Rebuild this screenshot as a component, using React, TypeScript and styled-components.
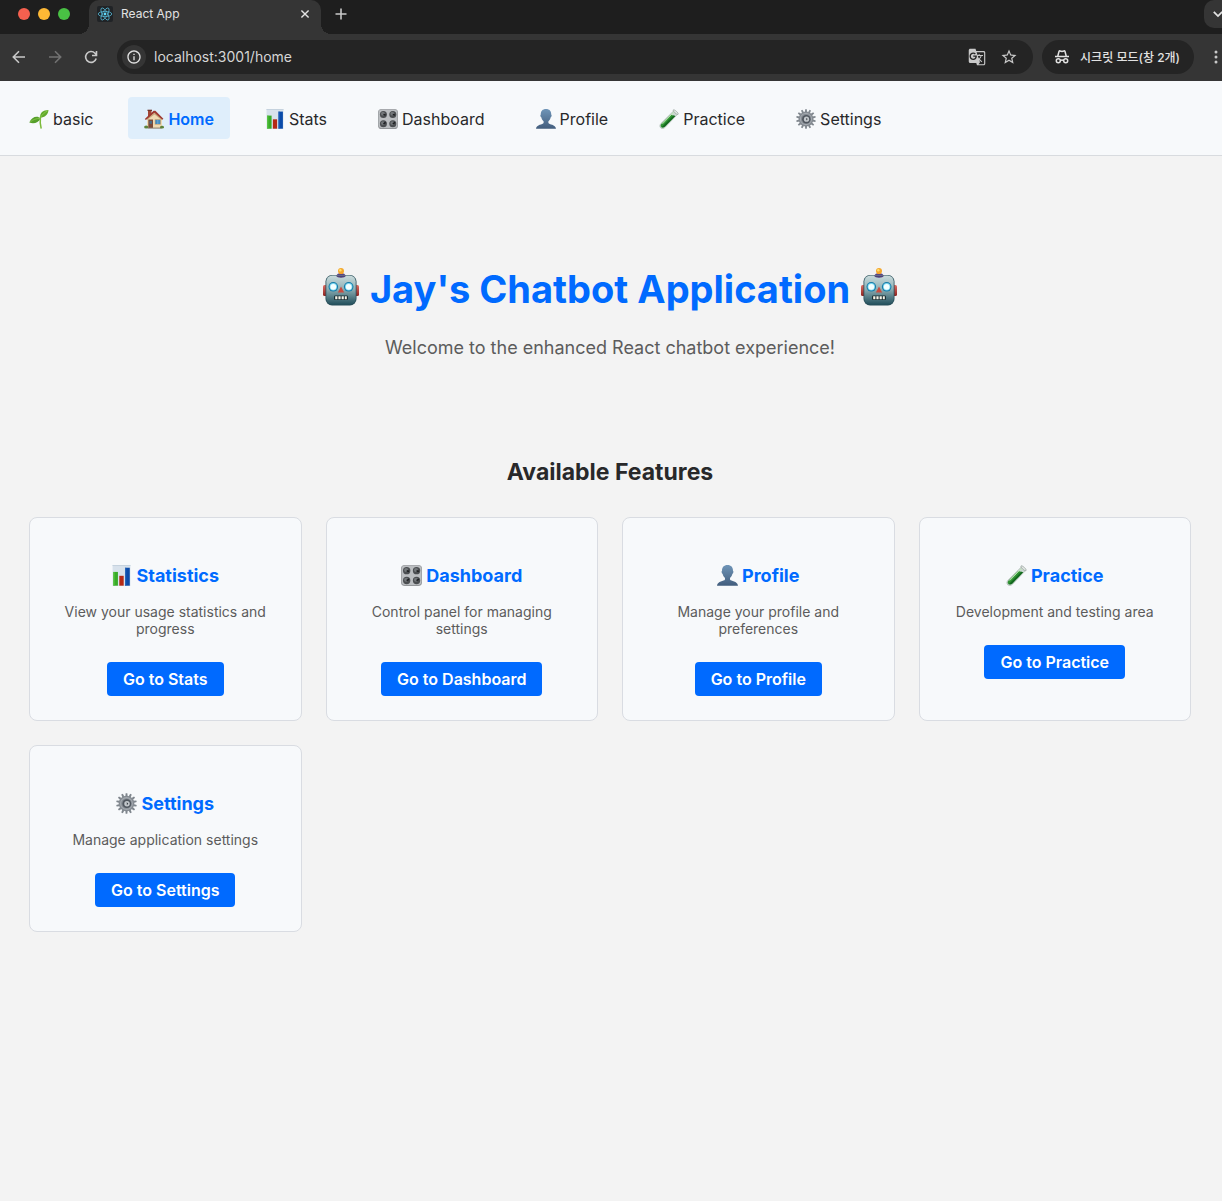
import React from 'react';
import styled, { createGlobalStyle } from 'styled-components';
import { MdGTranslate, MdStarBorder, MdInfoOutline } from 'react-icons/md';

const GlobalStyle = createGlobalStyle`
  * { box-sizing: border-box; }
  body {
    margin: 0;
    background: #f3f3f3;
    color: #28282a;
    font-family: Inter, "Noto Sans CJK KR", sans-serif;
    font-size: 16px;
  }
`;

/* ---------- browser chrome ---------- */

const TabStrip = styled.div`
  display: flex;
  align-items: flex-start;
  height: 34px;
  padding-left: 18px;
  background: #1e1e1e;
  overflow: hidden;
`;

const WindowControls = styled.div`
  display: flex;
  gap: 8px;
  padding-top: 8px;
  margin-right: 19px;
`;

const Light = styled.button<{ $color: string }>`
  width: 12px;
  height: 12px;
  padding: 0;
  border: 0;
  border-radius: 50%;
  background: ${(p) => p.$color};
`;

const Tab = styled.div`
  position: relative;
  display: flex;
  align-items: center;
  gap: 8px;
  width: 232px;
  height: 34px;
  padding: 0 10px 6px 8px;
  border-radius: 10px 10px 0 0;
  background: #353535;
  color: #e2e2e2;
  font-size: 12px;

  &::before,
  &::after {
    content: '';
    position: absolute;
    bottom: 0;
    width: 10px;
    height: 10px;
  }
  &::before {
    left: -10px;
    background: radial-gradient(circle at 0 0, #1e1e1e 10px, #353535 10px);
  }
  &::after {
    right: -10px;
    background: radial-gradient(circle at 100% 0, #1e1e1e 10px, #353535 10px);
  }
`;

const TabTitle = styled.span`
  flex: 1;
  padding-bottom: 2px;
`;

const IconButton = styled.button<{ $size?: number; $color?: string }>`
  display: flex;
  align-items: center;
  justify-content: center;
  flex: none;
  width: ${(p) => p.$size ?? 20}px;
  height: ${(p) => p.$size ?? 20}px;
  padding: 0;
  border: 0;
  background: none;
  color: ${(p) => p.$color ?? '#c9c9c9'};
`;

const NewTab = styled(IconButton)`
  margin: 4px 0 0 10px;
`;

const TabSearch = styled.button`
  display: flex;
  align-items: center;
  width: 28px;
  height: 28px;
  margin: 0 -10px 0 auto;
  padding: 0 0 0 8px;
  border: 0;
  border-radius: 10px;
  background: #353535;
  color: #e2e2e2;
`;

const Toolbar = styled.div`
  display: flex;
  align-items: center;
  height: 47px;
  padding: 0 0 1px 9px;
  background: #353535;
`;

const History = styled.div`
  display: flex;
  gap: 16px;
  margin-right: 16px;
`;

const AddressBar = styled.label`
  display: flex;
  align-items: center;
  flex: 1;
  height: 34px;
  margin-right: 9px;
  padding: 0 14px 0 5px;
  gap: 12px;
  border-radius: 17px;
  background: #242424;
`;

const SiteInfo = styled(IconButton)`
  margin-right: -4px;
  border-radius: 50%;
  background: #353535;
  color: #e2e2e2;
`;

const Address = styled.input`
  flex: 1;
  min-width: 0;
  padding: 0 0 2px;
  border: 0;
  outline: 0;
  background: none;
  color: #d6d6d6;
  font-family: inherit;
  font-size: 14px;
`;

const Incognito = styled.div`
  display: flex;
  align-items: center;
  gap: 10px;
  height: 34px;
  margin-right: 16px;
  padding: 0 14px 0 12px;
  border-radius: 17px;
  background: #242424;
  color: #e2e2e2;
  font-size: 12px;
  font-weight: 500;
  white-space: nowrap;
`;

const IncognitoLabel = styled.span`
  padding-bottom: 2px;
`;

/* ---------- page ---------- */

const Nav = styled.nav`
  display: flex;
  gap: 19px;
  padding: 16px 13px;
  border-bottom: 1px solid #d8dbdf;
  background: #f7f9fb;
`;

const NavLink = styled.a<{ $active?: boolean }>`
  display: flex;
  align-items: center;
  gap: 4px;
  height: 42px;
  padding: 2px 16px 0;
  border-radius: 4px;
  background: ${(p) => (p.$active ? '#dfeefb' : 'transparent')};
  color: ${(p) => (p.$active ? '#006aff' : '#28282a')};
  font-size: 16px;
  font-weight: ${(p) => (p.$active ? 600 : 400)};
  text-decoration: none;
`;

const Main = styled.main`
  padding: 0 31px 40px 29px;
`;

const Hero = styled.header`
  padding: 108px 0 96px;
  text-align: center;
`;

const Title = styled.h1`
  display: flex;
  align-items: center;
  justify-content: center;
  gap: 10px;
  margin: 0 0 20px;
  color: #006aff;
  font-size: 38px;
  font-weight: 700;
  line-height: 50px;

  svg {
    margin-bottom: 4px;
  }
`;

const Lead = styled.p`
  margin: 0;
  color: #5c5c5c;
  font-size: 18px;
  line-height: 28px;
`;

const SectionTitle = styled.h2`
  margin: 0 0 31px;
  font-size: 23px;
  font-weight: 700;
  line-height: 28px;
  text-align: center;
`;

const Grid = styled.div`
  display: grid;
  grid-template-columns: repeat(auto-fill, minmax(250px, 1fr));
  gap: 24px;
`;

const Card = styled.article`
  padding: 46px 24px 24px;
  border: 1px solid #d9dce2;
  border-radius: 8px;
  background: #f7f9fb;
  text-align: center;
`;

const CardTitle = styled.h3`
  display: flex;
  align-items: center;
  justify-content: center;
  gap: 4px;
  margin: 0 0 15px;
  color: #006aff;
  font-size: 18px;
  font-weight: 700;
  line-height: 24px;

  svg {
    margin-bottom: 2px;
  }
`;

const CardText = styled.p`
  margin: 0 0 25px;
  color: #5c5c5c;
  font-size: 14px;
  line-height: 17px;
`;

const CardButton = styled.button`
  height: 34px;
  padding: 0 16px;
  border: 0;
  border-radius: 4px;
  background: #006aff;
  color: #fff;
  font-family: inherit;
  font-size: 16px;
  font-weight: 600;
  vertical-align: top;
`;

/* ---------- pictograms, drawn on a 20 unit square ---------- */

const Glyph = styled.svg`
  flex: none;
  display: block;
`;

type IconProps = { size?: number };

const Seedling = ({ size = 20 }: IconProps) => (
  <Glyph width={size} height={size} viewBox="0 0 20 20" aria-hidden="true">
    <path d="M11.4 8.2C11 12 11 15 12.1 19" fill="none" stroke="#7cba3a" strokeWidth="1.5" strokeLinecap="round" />
    <path d="M11.2 8.8C10.500 4 14 1.200 19.500 1.100 19 6 15.800 8.500 11.200 8.800Z" fill="#62a92c" />
    <path d="M11.600 8.400C13 5.500 15.500 3.500 18.500 1.900" fill="none" stroke="#92cf4c" strokeWidth=".8" />
    <path d="M11.300 9.400C8.500 6.200 2.500 8 .3 13.500 5 15.200 9.800 13.500 11.300 9.400Z" fill="#559f2a" />
    <path d="M11 9.500C7.500 9.400 4 10.500 1.200 13" fill="none" stroke="#8bc94a" strokeWidth=".8" />
  </Glyph>
);

const House = ({ size = 20 }: IconProps) => (
  <Glyph width={size} height={size} viewBox="0 0 20 20" aria-hidden="true">
    <path d="M4 1h3.500v5L4 9Z" fill="#a24635" />
    <path d="M3.500.7h4.500v1.300H3.500Z" fill="#6e352d" />
    <path d="M10.500 2.500 18 9.500V19H3V9Z" fill="#efdab3" />
    <path d="M3 9.500 10.500 4 18 9.500v1.700L10.500 5.600 3 11Z" fill="#c9ab7e" />
    <path d="M.8 9.900 9.600 1.800h1.800l8 8-1 1-8-7-8.500 7.200Z" fill="#9e3930" />
    <path d="M4.300 10.500h4.700v8.500H4.300Z" fill="#7c4938" />
    <path d="M5.500 12h2.400v2.800H5.500Z" fill="#4b6f89" />
    <path d="M10.800 10.300h6v5.300h-6Z" fill="#b99a6e" />
    <path d="M11.400 10.900h4.800v4.100h-4.800Z" fill="#458cc1" />
    <path d="M13.800 10.900v4.100" stroke="#8dbdda" strokeWidth=".6" />
    <path d="M3.600 18.600h14v1h-14Z" fill="#8b7b68" />
    <ellipse cx="2.200" cy="18" rx="2.100" ry="1.600" fill="#5e833c" />
    <ellipse cx="18" cy="18.200" rx="2" ry="1.400" fill="#5e833c" />
  </Glyph>
);

const BarChart = ({ size = 20 }: IconProps) => (
  <Glyph width={size} height={size} viewBox="0 0 20 20" aria-hidden="true">
    <path d="M1.500 0h17v20h-17Z" fill="#d8e2ec" />
    <path d="M1.500 0h17v1h-17Z" fill="#c5d2de" />
    <path d="M2.200 6.600h4.400v13.100H2.200Z" fill="#38ab28" />
    <path d="M7.900 10.300h4.200v9.400H7.900Z" fill="#b52a16" />
    <path d="M13.500 2.600h4.400v17.100h-4.400Z" fill="#0b4ba9" />
    <path d="M2.200 6.600h1.200v13.100H2.200Z" fill="#58c542" />
    <path d="M13.500 2.600h1v17.100h-1Z" fill="#2767bd" />
  </Glyph>
);

const knobs = [
  [5.4, 5.4],
  [14.8, 5.4],
  [5.4, 14.8],
  [14.8, 14.8],
];

const ControlKnobs = ({ size = 20 }: IconProps) => (
  <Glyph width={size} height={size} viewBox="0 0 20 20" aria-hidden="true">
    <rect width="20" height="20" rx="3.600" fill="#94979a" />
    <rect x=".6" y=".5" width="18.800" height="18.500" rx="3.200" fill="#bbbec1" />
    {knobs.map(([x, y]) => (
      <g key={`${x}-${y}`}>
        <circle cx={x} cy={y} r="3.500" fill="#4b4e51" />
        <circle cx={x - 0.5} cy={y - 0.7} r="1.900" fill="#73777a" />
        <path d={`M${x} ${y}l2.200 ${y > 10 ? -1.4 : 0.7}`} stroke="#1c1e20" strokeWidth="1.500" />
      </g>
    ))}
  </Glyph>
);

const Bust = ({ size = 20 }: IconProps) => (
  <Glyph width={size} height={size} viewBox="0 0 20 20" aria-hidden="true">
    <defs>
      <linearGradient id="bust" x1="0" y1="0" x2="0" y2="1">
        <stop offset="0" stopColor="#6f95b8" />
        <stop offset="1" stopColor="#425d7d" />
      </linearGradient>
    </defs>
    <path
      d="M10 0C6.600 0 4.600 2.200 4.800 5.500c-.8.2-.5 2.500.6 3 .3 1.700 1.200 2.900 2.200 3.700v1.700C6.800 15.800.5 15 0 19.800h20C19.500 15 13.200 15.800 12.400 13.900v-1.700c1-.8 1.900-2 2.200-3.700 1.100-.5 1.400-2.800.6-3C15.400 2.200 13.400 0 10 0Z"
      fill="url(#bust)"
    />
  </Glyph>
);

const TestTube = ({ size = 20 }: IconProps) => (
  <Glyph width={size} height={size} viewBox="0 0 20 20" aria-hidden="true">
    <path d="m15 1.500 3.800 3.600L6.200 18.300c-3.300 3.200-7.300-.4-4.300-3.800Z" fill="#cbd7d1" stroke="#9ba8a2" strokeWidth=".5" />
    <path d="m11.700 5.800 4.600 1.100L6 17.600c-2.600 2.600-6-.1-3.500-2.800Z" fill="#2f9233" />
    <path d="M3 17.800 14.500 6.500l1.800.4L6 17.600c-1 .9-2.300 1-3 .2Z" fill="#14681f" />
    <path d="M3.500 14.800 14.500 3.400" stroke="#bdebb1" strokeWidth=".9" />
    <path d="M14.300.9c1-.9 5.700 3.200 4.800 4.400-1.100 1-5.600-3.300-4.800-4.400Z" fill="#e4e9e6" stroke="#929d98" strokeWidth=".7" />
  </Glyph>
);

const teeth = Array.from({ length: 14 }, (_, i) => (i * 360) / 14);

const Gear = ({ size = 20 }: IconProps) => (
  <Glyph width={size} height={size} viewBox="0 0 20 20" aria-hidden="true">
    {teeth.map((a) => (
      <path key={a} d="M8.900 3.500 9.200.2h1.600l.3 3.300Z" fill="#7f868d" transform={`rotate(${a} 10 10)`} />
    ))}
    <circle cx="10" cy="10" r="7.400" fill="#858b92" />
    <circle cx="10" cy="10" r="5.600" fill="none" stroke="#a4aab0" strokeWidth="1" />
    <circle cx="10.300" cy="10.200" r="4.200" fill="#50575f" />
    <circle cx="10.500" cy="10.200" r="2.600" fill="#c3c8cc" />
    <path d="M10.200 8.900 11.700 10l-1.300 1.600Z" fill="#343a40" />
  </Glyph>
);

const Robot = ({ size = 38 }: IconProps) => (
  <Glyph width={size} height={size} viewBox="0 0 38 38" aria-hidden="true">
    <defs>
      <linearGradient id="robotHead" x1="0" y1="0" x2="0" y2="1">
        <stop offset="0" stopColor="#cadbdc" />
        <stop offset=".45" stopColor="#91b2b7" />
        <stop offset="1" stopColor="#23505d" />
      </linearGradient>
      <linearGradient id="robotEar" x1="0" y1="0" x2="0" y2="1">
        <stop offset="0" stopColor="#e06c62" />
        <stop offset="1" stopColor="#8e2320" />
      </linearGradient>
    </defs>
    <rect x="1" y="17" width="5" height="11" rx="1.500" fill="url(#robotEar)" />
    <rect x="32" y="17" width="5" height="11" rx="1.500" fill="url(#robotEar)" />
    <path d="M14.500 8c0-4 9-4 9 0Z" fill="#594783" />
    <path d="M17 2h4v4h-4Z" fill="#e77924" />
    <circle cx="19" cy="3" r="3" fill="#f4a72e" />
    <circle cx="18.300" cy="2.200" r="1.200" fill="#ffe16b" />
    <rect x="3.500" y="7" width="31" height="30.500" rx="6.500" fill="#294f5a" />
    <rect x="4.300" y="7.400" width="29.400" height="29" rx="6" fill="url(#robotHead)" />
    <path d="M14 7.500h10c-1 3-9 3-10 0Z" fill="#4e3f77" />
    {[11.3, 26.7].map((x) => (
      <g key={x}>
        <circle cx={x} cy="18.800" r="4.800" fill="#147ca9" />
        <circle cx={x} cy="18.800" r="3.700" fill="#7fd8f2" />
        <circle cx={x} cy="18.800" r="2.900" fill="#f3ffff" />
      </g>
    ))}
    <path d="m19 18.500 3.200 6h-6.400Z" fill="#c84c40" />
    <rect x="12" y="27.500" width="14" height="4.500" rx="1.200" fill="#192d32" />
    <path d="M13.200 28.300h2.200v2.900h-2.200ZM16.400 28.300h2.200v2.900h-2.200ZM19.600 28.300h2.200v2.900h-2.200ZM22.800 28.300h2v2.900h-2Z" fill="#f5f4e8" />
  </Glyph>
);

const ReactMark = () => (
  <Glyph width="16" height="16" viewBox="0 0 16 16" aria-hidden="true">
    <rect width="16" height="16" rx="2" fill="#202326" />
    <g fill="none" stroke="#54b5d2" strokeWidth=".8">
      <ellipse cx="8" cy="8" rx="6.800" ry="2.600" />
      <ellipse cx="8" cy="8" rx="6.800" ry="2.600" transform="rotate(60 8 8)" />
      <ellipse cx="8" cy="8" rx="6.800" ry="2.600" transform="rotate(120 8 8)" />
    </g>
    <circle cx="8" cy="8" r="1.400" fill="#61dafb" />
  </Glyph>
);

const Stroke = ({ d, size = 20, width = 1.6 }: { d: string; size?: number; width?: number }) => (
  <Glyph width={size} height={size} viewBox="0 0 20 20" fill="none" stroke="currentColor" strokeWidth={width} aria-hidden="true">
    <path d={d} />
  </Glyph>
);

const IncognitoMark = () => (
  <Glyph width="16" height="16" viewBox="0 0 16 16" fill="none" stroke="currentColor" strokeWidth="1.500" aria-hidden="true">
    <path d="M1 7.500h14M3.800 7 5 2.500q.2-.8 1-.6l2 .5 2-.5q.8-.2 1 .6L12.200 7" />
    <circle cx="4.300" cy="11.800" r="2" />
    <circle cx="11.700" cy="11.800" r="2" />
    <path d="M6.300 11.500q1.700-.9 3.400 0" />
  </Glyph>
);

/* ---------- content ---------- */

const links = [
  { label: 'basic', href: '#basic', Icon: Seedling },
  { label: 'Home', href: '#home', Icon: House, active: true },
  { label: 'Stats', href: '#stats', Icon: BarChart },
  { label: 'Dashboard', href: '#dashboard', Icon: ControlKnobs },
  { label: 'Profile', href: '#profile', Icon: Bust },
  { label: 'Practice', href: '#practice', Icon: TestTube },
  { label: 'Settings', href: '#settings', Icon: Gear },
];

const features = [
  { title: 'Statistics', text: 'View your usage statistics and progress', action: 'Go to Stats', Icon: BarChart },
  { title: 'Dashboard', text: 'Control panel for managing settings', action: 'Go to Dashboard', Icon: ControlKnobs },
  { title: 'Profile', text: 'Manage your profile and preferences', action: 'Go to Profile', Icon: Bust },
  { title: 'Practice', text: 'Development and testing area', action: 'Go to Practice', Icon: TestTube },
  { title: 'Settings', text: 'Manage application settings', action: 'Go to Settings', Icon: Gear },
];

export default function App() {
  return (
    <>
      <GlobalStyle />
      <TabStrip>
        <WindowControls>
          <Light $color="#f6604f" aria-label="Close window" />
          <Light $color="#fdb835" aria-label="Minimize window" />
          <Light $color="#49c144" aria-label="Zoom window" />
        </WindowControls>
        <Tab>
          <ReactMark />
          <TabTitle>React App</TabTitle>
          <IconButton $size={12} $color="#e2e2e2" aria-label="Close tab">
            <Stroke size={12} width={2.4} d="M4 4l12 12M16 4 4 16" />
          </IconButton>
        </Tab>
        <NewTab aria-label="New tab">
          <Stroke d="M10 4.500v11M4.500 10h11" />
        </NewTab>
        <TabSearch aria-label="Search tabs">
          <Stroke size={12} width={3} d="M3 6.500 10 13.500 17 6.500" />
        </TabSearch>
      </TabStrip>
      <Toolbar>
        <History>
          <IconButton aria-label="Back">
            <Stroke d="M16 10H4.500M10 4.300 4.300 10 10 15.700" />
          </IconButton>
          <IconButton $color="#727272" aria-label="Forward">
            <Stroke d="M4 10h11.500M10 4.300 15.700 10 10 15.700" />
          </IconButton>
          <IconButton aria-label="Reload">
            <Stroke d="M15.200 11.500A5.400 5.400 0 1 1 14 6.300L15.300 7.700M15.500 4v4.500H11" />
          </IconButton>
        </History>
        <AddressBar>
          <SiteInfo $size={24} aria-label="Site information">
            <MdInfoOutline size={16} />
          </SiteInfo>
          <Address aria-label="Address" defaultValue="localhost:3001/home" />
          <IconButton aria-label="Translate">
            <MdGTranslate size={18} />
          </IconButton>
          <IconButton aria-label="Bookmark">
            <MdStarBorder size={18} />
          </IconButton>
        </AddressBar>
        <Incognito>
          <IncognitoMark />
          <IncognitoLabel>시크릿 모드(창 2개)</IncognitoLabel>
        </Incognito>
        <IconButton $size={12} aria-label="Menu">
          <Glyph width="4" height="16" viewBox="0 0 4 16" fill="currentColor" aria-hidden="true">
            <circle cx="2" cy="3" r="1.500" />
            <circle cx="2" cy="8" r="1.500" />
            <circle cx="2" cy="13" r="1.500" />
          </Glyph>
        </IconButton>
      </Toolbar>

      <Nav>
        {links.map(({ label, href, Icon, active }) => (
          <NavLink key={label} href={href} $active={active} aria-current={active ? 'page' : undefined}>
            <Icon />
            {label}
          </NavLink>
        ))}
      </Nav>

      <Main>
        <Hero>
          <Title>
            <Robot />
            Jay's Chatbot Application
            <Robot />
          </Title>
          <Lead>Welcome to the enhanced React chatbot experience!</Lead>
        </Hero>
        <SectionTitle>Available Features</SectionTitle>
        <Grid>
          {features.map(({ title, text, action, Icon }) => (
            <Card key={title}>
              <CardTitle>
                <Icon size={21} />
                {title}
              </CardTitle>
              <CardText>{text}</CardText>
              <CardButton>{action}</CardButton>
            </Card>
          ))}
        </Grid>
      </Main>
    </>
  );
}
